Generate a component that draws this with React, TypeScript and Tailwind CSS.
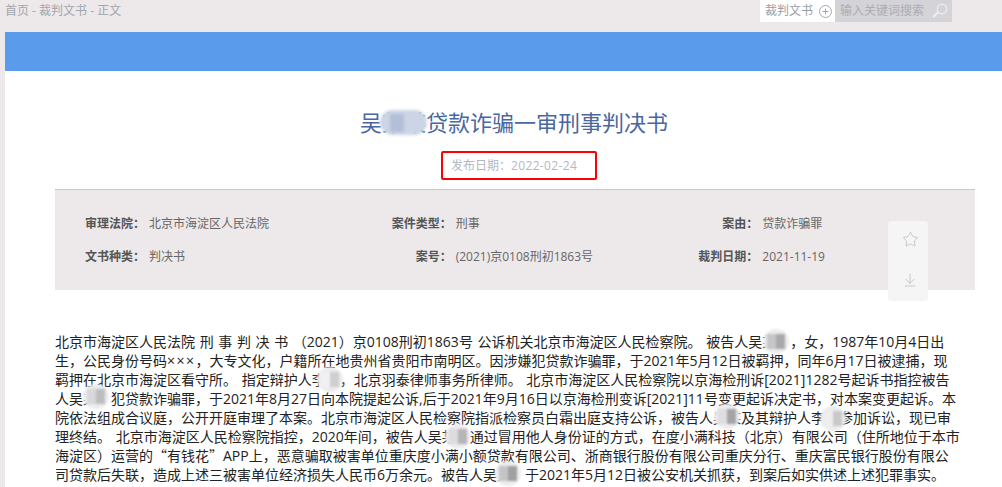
import { ArrowDownToLine, Star } from "lucide-react";

// redacted names in the document text
const blurs = [
  { pos: "left-[708px] top-[-3px]", block: "bg-[#a9a9ab]", side: "bg-[#c6c6c8]" },
  { pos: "left-[262px] top-[35px]", block: "bg-[#cfcfd1]", side: "bg-[#f1f1f2]" },
  { pos: "left-[28px] top-[52px]", block: "bg-[#bdbdbf]", side: "bg-[#d8d8da]" },
  { pos: "left-[659px] top-[72px]", block: "bg-[#a5a3a3]", side: "bg-[#dedee0]" },
  { pos: "left-[765px] top-[74px]", block: "bg-[#c9c9cb]", side: "bg-[#eeeeef]" },
  { pos: "left-[390px] top-[92px]", block: "bg-[#b5b5b7]", side: "bg-[#dcdcde]" },
  { pos: "left-[440px] top-[129px]", block: "bg-[#a0a0a2]", side: "bg-[#c4c4c6]" },
];

function Field({ label, value }: { label: string; value: string }) {
  return (
    <div className="flex items-center">
      <span className="w-[90px] text-right font-bold text-[#555555]">{label}：</span>
      <span className="ml-1 text-[#666666]">{value}</span>
    </div>
  );
}

export default function App() {
  return (
    <div className="h-[487px] w-full overflow-hidden bg-[#ede9ea] font-['Open_Sans','Noto_Sans_CJK_SC',sans-serif] text-xs [text-spacing-trim:space-all]">
      {/* Top bar */}
      <div className="flex h-8 items-start justify-between pl-[5px] pr-[50px]">
        <div className="leading-[21px] text-[#a2a6ae]">首页 - 裁判文书 - 正文</div>
        <div className="flex h-[22px]">
          <div className="flex w-[75px] items-center gap-[6px] bg-white pl-[5px] text-[#9a9ea8]">
            <span>裁判文书</span>
            <svg width="13" height="13" viewBox="0 0 13 13" fill="none" stroke="#a3a8b4" strokeWidth="1">
              <circle cx="6.5" cy="6.5" r="6" />
              <path d="M6.5 3.5v6M3.5 6.5h6" />
            </svg>
          </div>
          <div className="flex w-[117px] items-center justify-between bg-[#d4d3d8] pl-[5px] pr-1 text-[#adadb1]">
            <span>输入关键词搜索</span>
            <svg width="16" height="16" viewBox="0 0 16 16" fill="none" stroke="#eeeef0" strokeWidth="1.2">
              <circle cx="10" cy="6" r="4.8" />
              <path d="M6.6 9.4 1.6 14.4 M5.6 8.8 1 13.4" />
            </svg>
          </div>
        </div>
      </div>

      {/* Article panel, wider than the window */}
      <div className="ml-[5px] h-[455px] w-[1020px] bg-white">
        <div className="h-[39px] bg-[#5b9bec]" />

        <div className="relative mt-[36px] flex h-[32px] items-center justify-center pr-[2px] text-[22px] text-[#4a679f]">
          <span>吴某某贷款诈骗一审刑事判决书</span>
          <div className="absolute left-[375px] top-[3px] flex h-[25px] w-[47px] items-center overflow-hidden rounded-full bg-[#ccd4e5] pl-[10px] blur-[1.5px]">
            <div className="h-[18px] w-[14px] bg-[#b3bfd9]" />
          </div>
        </div>

        <div className="ml-[436px] mt-[12px] flex h-[29px] w-[156px] items-center rounded-[2px] border-[2.5px] border-[#ff0000] pl-[8px] text-[#b3b7c2]">
          发布日期：<span className="tracking-[0.35px]">2022-02-24</span>
        </div>

        {/* Case info */}
        <div className="relative mx-[50px] mt-[9px] h-[101px] border-t border-[#c5cad0] bg-[#ede9ea] pt-[25px]">
          <div className="grid grid-cols-3 gap-y-[15px] leading-[18px]">
            <Field label="审理法院" value="北京市海淀区人民法院" />
            <Field label="案件类型" value="刑事" />
            <Field label="案由" value="贷款诈骗罪" />
            <Field label="文书种类" value="判决书" />
            <Field label="案号" value="(2021)京0108刑初1863号" />
            <Field label="裁判日期" value="2021-11-19" />
          </div>
          <div className="absolute left-[833px] top-[31px] flex h-[80px] w-10 flex-col items-center justify-between rounded-[3px] bg-[#f5f5f6] pb-[13px] pl-[4px] pt-[10px] text-[#b4b4b8]">
            <Star size={17} strokeWidth={1} />
            <ArrowDownToLine size={16} strokeWidth={1} />
          </div>
        </div>

        {/* Document text, broken where the reference breaks */}
        <div className="relative ml-[50px] mt-[42px] w-[920px] whitespace-nowrap text-sm leading-[19px] text-[#222222] [word-spacing:1px]">
          北京市海淀区人民法院 刑 事 判 决 书 （2021）京0108刑初1863号 公诉机关北京市海淀区人民检察院。 被告人吴某　，女，1987年10月4日出
          <br />
          生，公民身份号码<span className="tracking-[1.5px]">×××</span>，大专文化，户籍所在地贵州省贵阳市南明区。因涉嫌犯贷款诈骗罪，于2021年5月12日被羁押，同年6月17日被逮捕，现
          <br />
          羁押在北京市海淀区看守所。 指定辩护人李某，北京羽泰律师事务所律师。 北京市海淀区人民检察院以京海检刑诉[2021]1282号起诉书指控被告
          <br />
          人吴某　犯贷款诈骗罪，于2021年8月27日向本院提起公诉,后于2021年9月16日以京海检刑变诉[2021]11号变更起诉决定书，对本案变更起诉。本
          <br />
          院依法组成合议庭，公开开庭审理了本案。北京市海淀区人民检察院指派检察员白霜出庭支持公诉，被告人吴某及其辩护人李某参加诉讼，现已审
          <br />
          理终结。 北京市海淀区人民检察院指控，2020年间，被告人吴某　通过冒用他人身份证的方式，在度小满科技（北京）有限公司（住所地位于本市
          <br />
          海淀区）运营的<span className="font-['Noto_Sans_CJK_SC']">“</span>有钱花<span className="font-['Noto_Sans_CJK_SC']">”</span>APP上，恶意骗取被害单位重庆度小满小额贷款有限公司、浙商银行股份有限公司重庆分行、重庆富民银行股份有限公
          <br />
          司贷款后失联，造成上述三被害单位经济损失人民币6万余元。被告人吴某　于2021年5月12日被公安机关抓获，到案后如实供述上述犯罪事实。
          {blurs.map((b) => (
            <div
              key={b.pos}
              className={`absolute flex h-[25px] w-[26px] items-center overflow-hidden rounded-full bg-[#ececee] pl-[4px] blur-[1px] ${b.pos}`}
            >
              <div className={`h-[15px] w-[9px] ${b.side}`} />
              <div className={`h-[15px] w-[9px] ${b.block}`} />
            </div>
          ))}
        </div>
      </div>
    </div>
  );
}
